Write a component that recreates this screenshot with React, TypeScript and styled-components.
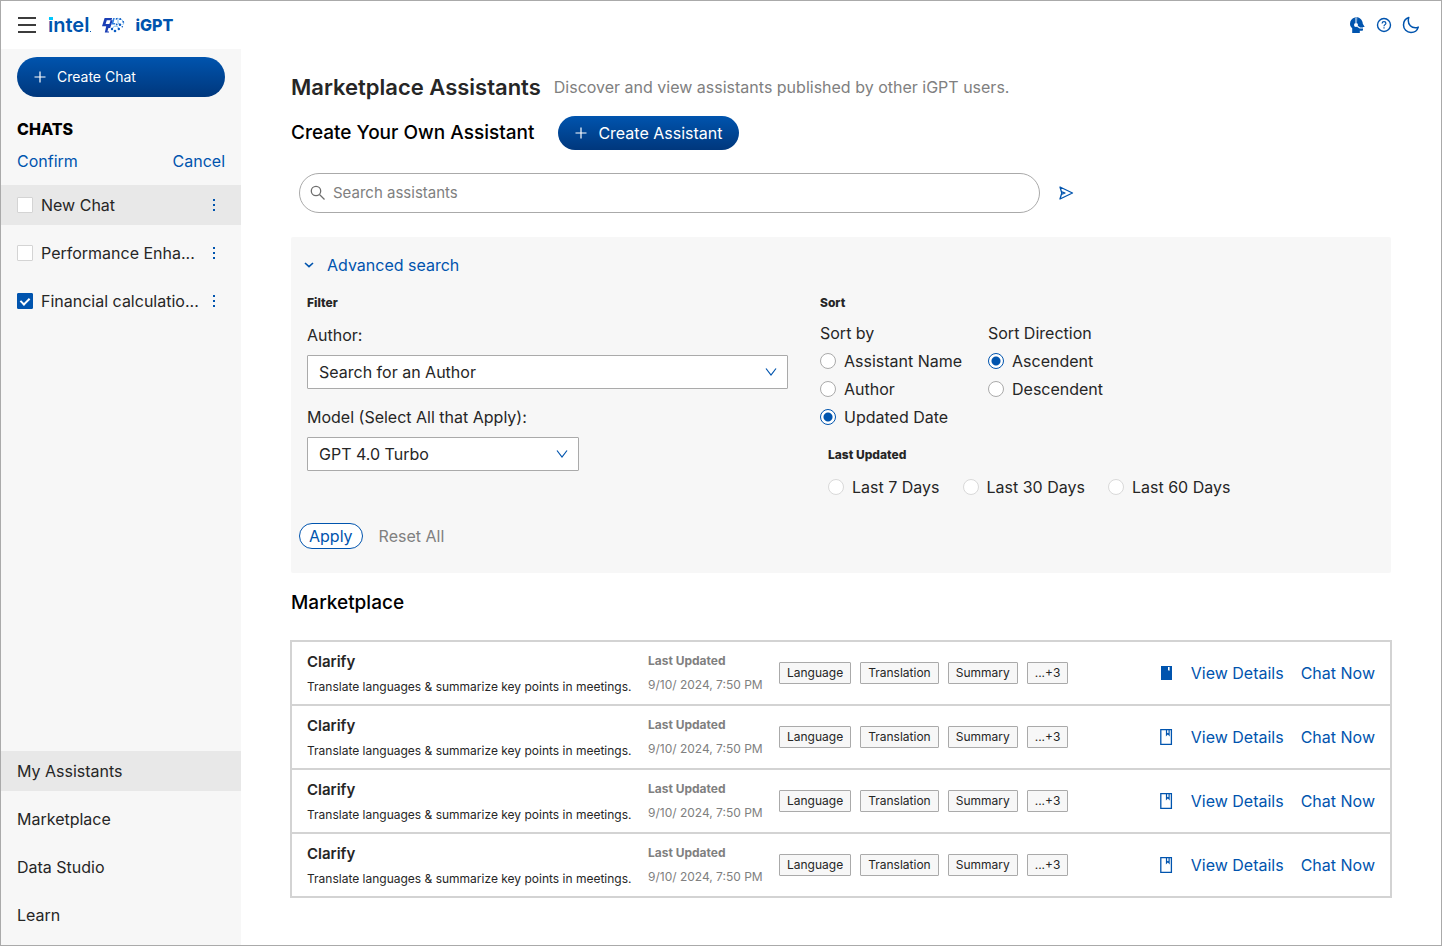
import React, { useState } from "react";
import styled, { createGlobalStyle, css } from "styled-components";

const BLUE = "#0054ae";
const INK = "#262626";
const MUTED = "#808080";

const GlobalStyle = createGlobalStyle`
  *, *::before, *::after { box-sizing: border-box; }
  body {
    margin: 0;
    background: #fff;
    color: ${INK};
    font-family: Inter, "Open Sans", "Liberation Sans", sans-serif;
    font-size: 16px;
    line-height: 24px;
  }
  button, input, select { font: inherit; }
  h1, h2, h3, p, ul, fieldset { margin: 0; padding: 0; border: 0; }
  ul { list-style: none; }
`;

const Page = styled.div`
  min-height: 100vh;
  display: flex;
  flex-direction: column;
  border: 1px solid #aaa;
`;

const Header = styled.header`
  display: flex;
  align-items: center;
  height: 48px;
  padding: 0 21px 0 16px;
`;

const IconButton = styled.button`
  display: inline-flex;
  align-items: center;
  justify-content: center;
  padding: 0;
  border: 0;
  background: none;
  color: ${BLUE};
  cursor: pointer;
`;

const Brand = styled.a`
  display: flex;
  align-items: center;
  margin-left: 11px;
  color: ${BLUE};
  text-decoration: none;
`;

const IntelMark = styled.span`
  position: relative;
  margin-right: 12px;
  font-size: 20px;
  font-weight: 600;
  &::before {
    content: "";
    position: absolute;
    top: 4px;
    left: 1px;
    width: 4px;
    height: 3px;
    background: #00c7fd;
  }
  &::after {
    content: "";
    position: absolute;
    right: -2px;
    bottom: 5px;
    width: 1px;
    height: 1px;
    background: ${BLUE};
  }
`;

const ProductName = styled.span`
  margin-left: 10px;
  font-size: 16px;
  font-weight: 800;
`;

const HeaderTools = styled.div`
  display: flex;
  gap: 9px;
  margin-left: auto;
`;

const Body = styled.div`
  flex: 1;
  display: flex;
`;

const Sidebar = styled.aside`
  flex: none;
  width: 240px;
  display: flex;
  flex-direction: column;
  padding: 8px 0 10px;
  background: #f7f7f7;
`;

const PillButton = styled.button<{ $wide?: boolean }>`
  display: flex;
  align-items: center;
  gap: 11px;
  padding: 0 17px;
  border: 0;
  border-radius: 20px;
  background: linear-gradient(#0054ae, #00377c);
  color: #fff;
  cursor: pointer;
  ${(p) =>
    p.$wide
      ? css`
          height: 40px;
          margin: 0 16px;
          font-size: 14px;
        `
      : css`
          height: 34px;
          font-size: 16px;
        `}
`;

const SidebarTitle = styled.h2`
  margin: 20px 16px 8px;
  font-size: 16px;
  line-height: 24px;
  font-weight: 800;
  color: #000;
`;

const SidebarActions = styled.div`
  display: flex;
  justify-content: space-between;
  margin: 0 16px 12px;
`;

const TextButton = styled.button<{ $muted?: boolean }>`
  padding: 0;
  border: 0;
  background: none;
  color: ${(p) => (p.$muted ? MUTED : BLUE)};
  white-space: nowrap;
  cursor: pointer;
`;

const SideList = styled.ul`
  display: flex;
  flex-direction: column;
  gap: 8px;
`;

const SideItem = styled.li<{ $active?: boolean }>`
  display: flex;
  align-items: center;
  justify-content: space-between;
  height: 40px;
  padding: 0 19px 0 16px;
  background: ${(p) => (p.$active ? "#e8e8e8" : "transparent")};
`;

const SideNav = styled.nav`
  margin-top: auto;
`;

const NavLink = styled.a`
  color: ${INK};
  text-decoration: none;
`;

const Option = styled.label`
  display: flex;
  align-items: center;
  gap: 8px;
  white-space: nowrap;
`;

const Checkbox = styled.input`
  appearance: none;
  position: relative;
  flex: none;
  width: 16px;
  height: 16px;
  margin: 0;
  border: 1px solid #d4d4d4;
  border-radius: 1px;
  background: #fff;
  &:checked {
    border-color: ${BLUE};
    background: ${BLUE};
  }
  &:checked::after {
    content: "";
    position: absolute;
    top: 2px;
    left: 4px;
    width: 6px;
    height: 9px;
    border: solid #fff;
    border-width: 0 2px 2px 0;
    transform: rotate(45deg);
  }
`;

const Radio = styled.input<{ $faint?: boolean }>`
  appearance: none;
  flex: none;
  width: 16px;
  height: 16px;
  margin: 0;
  border: 1px solid ${(p) => (p.$faint ? "#d9d9d9" : "#aaa")};
  border-radius: 50%;
  background: #fff;
  &:checked {
    border-color: ${BLUE};
    background: radial-gradient(circle, ${BLUE} 4px, #fff 5px);
  }
`;

const Main = styled.main`
  flex: 1;
  min-width: 0;
  padding: 22px 50px 40px;
`;

const TitleRow = styled.div`
  display: flex;
  align-items: center;
  gap: 13px;
`;

const PageTitle = styled.h1`
  font-size: 22px;
  line-height: 32px;
  font-weight: 600;
  white-space: nowrap;
`;

const Subtitle = styled.p`
  color: ${MUTED};
`;

const CreateRow = styled.div`
  display: flex;
  align-items: center;
  gap: 24px;
  margin: 13px 0 23px;
`;

const SectionTitle = styled.h2`
  font-size: 19px;
  line-height: 28px;
  font-weight: 500;
  color: #000;
  white-space: nowrap;
`;

const SearchForm = styled.form`
  display: flex;
  align-items: center;
  gap: 18px;
  margin: 0 8px 24px;
`;

const SearchBox = styled.label`
  flex: 0 1 741px;
  display: flex;
  align-items: center;
  gap: 7px;
  height: 40px;
  padding: 0 10px;
  border: 1px solid #aaa;
  border-radius: 20px;
  color: #6e6e6e;
`;

const SearchInput = styled.input`
  flex: 1;
  min-width: 0;
  padding: 0;
  border: 0;
  outline: 0;
  background: none;
  font-size: 15px;
  color: ${INK};
  &::placeholder {
    color: ${MUTED};
    opacity: 1;
  }
`;

const Panel = styled.section`
  padding: 16px 16px 24px;
  border-radius: 2px;
  background: #f7f7f7;
`;

const Disclosure = styled(TextButton)`
  display: flex;
  align-items: center;
  gap: 13px;
  margin-left: -3px;
`;

const FilterGrid = styled.div`
  display: grid;
  grid-template-columns: minmax(0, 481px) minmax(0, 1fr);
  gap: 32px;
  margin: 18px 0 24px;
`;

const SmallTitle = styled.h3<{ $muted?: boolean }>`
  font-size: 12px;
  line-height: 16px;
  font-weight: ${(p) => (p.$muted ? 700 : 800)};
  color: ${(p) => (p.$muted ? MUTED : INK)};
`;

const Field = styled.div`
  display: flex;
  flex-direction: column;
  gap: 8px;
  margin-top: 12px;
  & + & {
    margin-top: 16px;
  }
`;

const SelectWrap = styled.div<{ $short?: boolean }>`
  position: relative;
  max-width: ${(p) => (p.$short ? "272px" : "none")};
  color: ${BLUE};
  svg {
    position: absolute;
    top: 12px;
    right: 11px;
    pointer-events: none;
  }
`;

const Select = styled.select`
  appearance: none;
  display: block;
  width: 100%;
  height: 34px;
  padding: 0 32px 0 11px;
  border: 1px solid #aaa;
  border-radius: 1px;
  background: #fff;
  color: ${INK};
`;

const SortGroups = styled.div`
  display: grid;
  grid-template-columns: 168px 168px;
  margin: 10px 0 18px;
`;

const RadioColumn = styled.fieldset`
  display: flex;
  flex-direction: column;
  gap: 4px;
`;

const UpdatedGroup = styled.div`
  padding-left: 8px;
`;

const RadioRow = styled.div`
  display: flex;
  flex-wrap: wrap;
  gap: 23px;
  margin-top: 12px;
`;

const PanelActions = styled.div`
  display: flex;
  align-items: center;
  gap: 16px;
  margin-left: -8px;
`;

const ApplyButton = styled.button`
  height: 26px;
  padding: 0 9px;
  border: 1px solid ${BLUE};
  border-radius: 13px;
  background: #fff;
  color: ${BLUE};
  line-height: 24px;
  cursor: pointer;
`;

const ListTitle = styled(SectionTitle)`
  margin: 16px 0 23px;
`;

const AssistantList = styled.ul`
  margin: 0 -1px;
  border: 2px solid #d3d3d3;
  border-bottom: 0;
`;

const AssistantRow = styled.li`
  display: grid;
  grid-template-columns: 341px 131px 1fr auto;
  align-items: center;
  height: 64px;
  padding: 0 15px;
  border-bottom: 2px solid #d3d3d3;
`;

const Stack = styled.div<{ $gap: number }>`
  display: flex;
  flex-direction: column;
  gap: ${(p) => p.$gap}px;
  white-space: nowrap;
`;

const AssistantName = styled.h3`
  font-size: 15px;
  line-height: 22px;
  font-weight: 600;
`;

const Small = styled.p<{ $muted?: boolean }>`
  font-size: 12px;
  line-height: 16px;
  color: ${(p) => (p.$muted ? MUTED : INK)};
`;

const Tags = styled.div`
  display: flex;
  gap: 9px;
`;

const Tag = styled.span`
  padding: 0 7px;
  border: 1px solid #aaa;
  border-radius: 1px;
  background: #f7f7f7;
  font-size: 12px;
  line-height: 20px;
  white-space: nowrap;
`;

const RowActions = styled.div`
  display: flex;
  align-items: center;
  gap: 17px;
`;

const PlusIcon = () => (
  <svg width="12" height="12" viewBox="0 0 12 12" stroke="currentColor" strokeWidth="1.2" aria-hidden="true">
    <path d="M6 0.5v11M0.5 6h11" />
  </svg>
);

const MenuIcon = () => (
  <svg width="20" height="18" viewBox="0 0 20 18" stroke="#3c3c3c" strokeWidth="2" aria-hidden="true">
    <path d="M1 2h18M1 9h18M1 16h18" />
  </svg>
);

const EmblemIcon = () => (
  <svg width="24" height="16" viewBox="0 0 24 16" fill="none" aria-hidden="true">
    <path fill="#1b3fb5" d="M3.600 1h7.600l-.8 2.200H5.800L4.600 7h3.800L9.600 3.200h2.200L9.200 11H7.400L6.400 14.500H8v1H3.800L5.200 9.200H1L3.600 1Z" />
    <path fill="#2f7fe0" d="M12.200 1h1.600L12.400 6h2l-.5 1.600h-3.600L12.200 1Z" />
    <g stroke="#7db9ee" strokeWidth="1">
      <path d="M14.500 2.200c1.200-1.200 3-1.200 3.600.4 1.400-1 3.200-.4 3.400 1.200 1.600.8 1.600 3 .2 4" />
      <path d="M17 3v3.200l2.200 1.400M11 11.800l2.200-2.600h3l1.800 2.600" />
    </g>
    <g fill="#0a5cc4">
      <circle cx="15.700" cy="1.800" r="0.900" />
      <circle cx="19.200" cy="2" r="0.900" />
      <circle cx="22.200" cy="4.800" r="0.900" />
      <circle cx="19" cy="7.800" r="1.300" />
      <circle cx="15.700" cy="7.400" r="0.900" />
      <circle cx="11" cy="12" r="1.200" />
      <circle cx="17.800" cy="12" r="1.200" />
      <circle cx="14" cy="14" r="1.300" />
      <circle cx="21.300" cy="9.800" r="0.800" />
    </g>
  </svg>
);

const AgentIcon = () => (
  <svg width="18" height="18" viewBox="0 0 18 18" aria-hidden="true">
    <path fill={BLUE} d="M7 1.500C4 2.300 2 4.600 2 7.800c0 2.100.8 3.400 2.200 4.400V17h7.600v-2.200h2.400c.5 0 .8-.4.800-1V11h1.700l-1.900-3.200C14.700 4.600 12.500 1.800 9.200 1L9 6.600h-2V1.500Z" />
    <path fill={BLUE} d="M7.500 1h1v5h-1z" />
    <circle cx="8" cy="9" r="2" fill="#fff" />
    <path stroke="#fff" strokeWidth="1.200" fill="none" d="M9.300 10.200l2.500 1.800h3.700" />
  </svg>
);

const HelpIcon = () => (
  <svg width="18" height="18" viewBox="0 0 18 18" fill="none" stroke={BLUE} strokeWidth="1.400" aria-hidden="true">
    <circle cx="9" cy="9" r="6.500" />
    <path d="M7.100 7.400c0-1.100.8-1.800 1.900-1.800s1.900.7 1.900 1.700c0 1.300-1.900 1.400-1.900 2.900M9 11.200v1.300" strokeWidth="1.200" />
  </svg>
);

const MoonIcon = () => (
  <svg width="18" height="18" viewBox="0 0 18 18" fill="none" stroke={BLUE} strokeWidth="1.500" strokeLinejoin="round" aria-hidden="true">
    <path d="M6.800 1.500C3.500 2.700 1.500 5.600 1.500 8.900c0 4.200 3.300 7.600 7.500 7.600 3.400 0 6.300-2.200 7.300-5.400-1 .5-2 .7-3 .7-4 0-7-3-7-7 0-1.200.1-2.300.5-3.300Z" />
  </svg>
);

const KebabIcon = () => (
  <svg width="16" height="16" viewBox="0 0 16 16" fill={BLUE} aria-hidden="true">
    <path d="M7 2h2v2H7zM7 7h2v2H7zM7 12h2v2H7z" />
  </svg>
);

const SearchIcon = () => (
  <svg width="16" height="16" viewBox="0 0 16 16" fill="none" stroke="currentColor" strokeWidth="1.300" aria-hidden="true">
    <circle cx="6" cy="6" r="4.700" />
    <path d="M9.500 9.500l5 5" />
  </svg>
);

const SendIcon = () => (
  <svg width="16" height="16" viewBox="0 0 16 16" fill="none" stroke={BLUE} strokeWidth="1.300" strokeLinejoin="round" aria-hidden="true">
    <path d="M2 2l12.500 6L2 14l1.800-6L2 2Z" />
    <path d="M4 6.800 7 8 4 9.200" />
  </svg>
);

const ChevronIcon = () => (
  <svg width="12" height="10" viewBox="0 0 12 10" fill="none" stroke="currentColor" strokeWidth="1.200" aria-hidden="true">
    <path d="M1 1.500l5 6.500 5-6.500" />
  </svg>
);

const SmallChevronIcon = () => (
  <svg width="10" height="6" viewBox="0 0 10 6" fill="none" stroke="currentColor" strokeWidth="1.600" aria-hidden="true">
    <path d="M1 1l4 3.700L9 1" />
  </svg>
);

const BookmarkIcon = ({ saved }: { saved?: boolean }) => (
  <svg width="14" height="18" viewBox="0 0 14 18" fill="none" aria-hidden="true">
    {saved ? (
      <>
        <path fill={BLUE} d="M1 2h11v14H1z" />
        <path fill="#fff" d="M8 3h1.600v4l-.8-.9-.8.900z" />
      </>
    ) : (
      <>
        <path stroke={BLUE} strokeWidth="1.300" d="M.8 1.700h10.600v14.600H.8z" />
        <path stroke={BLUE} strokeWidth="1.200" d="M6.500 2v5l1.300-1.300L9.100 7V2" />
      </>
    )}
  </svg>
);

const chats = ["New Chat", "Performance Enha...", "Financial calculatio..."];
const links = ["My Assistants", "Marketplace", "Data Studio", "Learn"];
const tags = ["Language", "Translation", "Summary", "...+3"];

type RadioGroupProps = {
  name: string;
  options: string[];
  initial?: string;
  faint?: boolean;
};

function RadioOptions({ name, options, initial, faint }: RadioGroupProps) {
  const [value, setValue] = useState(initial);
  return (
    <>
      {options.map((option) => (
        <Option key={option}>
          <Radio
            type="radio"
            name={name}
            $faint={faint}
            checked={value === option}
            onChange={() => setValue(option)}
          />
          {option}
        </Option>
      ))}
    </>
  );
}

export default function App() {
  return (
    <Page>
      <GlobalStyle />
      <Header>
        <IconButton aria-label="Menu"><MenuIcon /></IconButton>
        <Brand href="#home">
          <IntelMark>intel</IntelMark>
          <EmblemIcon />
          <ProductName>iGPT</ProductName>
        </Brand>
        <HeaderTools>
          <IconButton aria-label="Support"><AgentIcon /></IconButton>
          <IconButton aria-label="Help"><HelpIcon /></IconButton>
          <IconButton aria-label="Dark mode"><MoonIcon /></IconButton>
        </HeaderTools>
      </Header>
      <Body>
        <Sidebar>
          <PillButton $wide><PlusIcon />Create Chat</PillButton>
          <SidebarTitle>CHATS</SidebarTitle>
          <SidebarActions>
            <TextButton>Confirm</TextButton>
            <TextButton>Cancel</TextButton>
          </SidebarActions>
          <SideList>
            {chats.map((chat, i) => (
              <SideItem key={chat} $active={i === 0}>
                <Option>
                  <Checkbox type="checkbox" defaultChecked={i === 2} />
                  {chat}
                </Option>
                <IconButton aria-label="Chat options"><KebabIcon /></IconButton>
              </SideItem>
            ))}
          </SideList>
          <SideNav>
            <SideList>
              {links.map((link, i) => (
                <SideItem key={link} $active={i === 0}>
                  <NavLink href="#">{link}</NavLink>
                </SideItem>
              ))}
            </SideList>
          </SideNav>
        </Sidebar>
        <Main>
          <TitleRow>
            <PageTitle>Marketplace Assistants</PageTitle>
            <Subtitle>Discover and view assistants published by other iGPT users.</Subtitle>
          </TitleRow>
          <CreateRow>
            <SectionTitle>Create Your Own Assistant</SectionTitle>
            <PillButton><PlusIcon />Create Assistant</PillButton>
          </CreateRow>
          <SearchForm onSubmit={(e) => e.preventDefault()}>
            <SearchBox>
              <SearchIcon />
              <SearchInput type="text" placeholder="Search assistants" aria-label="Search assistants" />
            </SearchBox>
            <IconButton aria-label="Search"><SendIcon /></IconButton>
          </SearchForm>
          <Panel>
            <Disclosure aria-expanded="true"><SmallChevronIcon />Advanced search</Disclosure>
            <FilterGrid>
              <div>
                <SmallTitle>Filter</SmallTitle>
                <Field>
                  <label htmlFor="author">Author:</label>
                  <SelectWrap>
                    <Select id="author"><option>Search for an Author</option></Select>
                    <ChevronIcon />
                  </SelectWrap>
                </Field>
                <Field>
                  <label htmlFor="model">Model (Select All that Apply):</label>
                  <SelectWrap $short>
                    <Select id="model"><option>GPT 4.0 Turbo</option></Select>
                    <ChevronIcon />
                  </SelectWrap>
                </Field>
              </div>
              <div>
                <SmallTitle>Sort</SmallTitle>
                <SortGroups>
                  <RadioColumn aria-label="Sort by">
                    <span>Sort by</span>
                    <RadioOptions name="sort" options={["Assistant Name", "Author", "Updated Date"]} initial="Updated Date" />
                  </RadioColumn>
                  <RadioColumn aria-label="Sort Direction">
                    <span>Sort Direction</span>
                    <RadioOptions name="direction" options={["Ascendent", "Descendent"]} initial="Ascendent" />
                  </RadioColumn>
                </SortGroups>
                <UpdatedGroup>
                  <SmallTitle>Last Updated</SmallTitle>
                  <RadioRow>
                    <RadioOptions name="updated" options={["Last 7 Days", "Last 30 Days", "Last 60 Days"]} faint />
                  </RadioRow>
                </UpdatedGroup>
              </div>
            </FilterGrid>
            <PanelActions>
              <ApplyButton>Apply</ApplyButton>
              <TextButton $muted>Reset All</TextButton>
            </PanelActions>
          </Panel>
          <ListTitle>Marketplace</ListTitle>
          <AssistantList>
            {[0, 1, 2, 3].map((row) => (
              <AssistantRow key={row}>
                <Stack $gap={6}>
                  <AssistantName>Clarify</AssistantName>
                  <Small>Translate languages &amp; summarize key points in meetings.</Small>
                </Stack>
                <Stack $gap={8}>
                  <SmallTitle $muted>Last Updated</SmallTitle>
                  <Small $muted>9/10/ 2024, 7:50 PM</Small>
                </Stack>
                <Tags>
                  {tags.map((tag) => <Tag key={tag}>{tag}</Tag>)}
                </Tags>
                <RowActions>
                  <IconButton aria-label="Bookmark"><BookmarkIcon saved={row === 0} /></IconButton>
                  <TextButton>View Details</TextButton>
                  <TextButton>Chat Now</TextButton>
                </RowActions>
              </AssistantRow>
            ))}
          </AssistantList>
        </Main>
      </Body>
    </Page>
  );
}
